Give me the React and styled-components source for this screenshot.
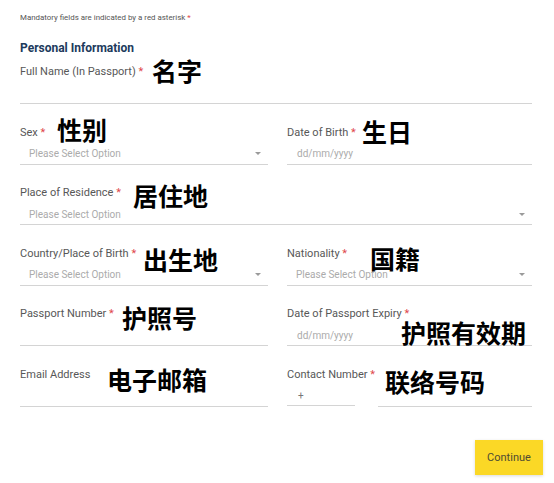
import styled, { createGlobalStyle } from "styled-components";

const GlobalStyle = createGlobalStyle`
  html, body {
    margin: 0;
    padding: 0;
    background: #ffffff;
  }
  body {
    font-family: Roboto, "Noto Sans", "Noto Sans CJK SC", sans-serif;
  }
`;

const rows = [
  { label: "Sex", req: true, kind: "select", note: "性别", x: 37, y: 3 },
  { label: "Date of Birth", req: true, kind: "date", note: "生日", x: 75, y: 5 },
  { label: "Place of Residence", req: true, kind: "select", span: true, note: "居住地", x: 113, y: 9 },
  { label: "Country/Place of Birth", req: true, kind: "select", note: "出生地", x: 123, y: 12 },
  { label: "Nationality", req: true, kind: "select", note: "国籍", x: 83, y: 11 },
  { label: "Passport Number", req: true, kind: "text", note: "护照号", x: 102, y: 10 },
  { label: "Date of Passport Expiry", req: true, kind: "date", note: "护照有效期", x: 114, y: 25 },
  { label: "Email Address", kind: "text", note: "电子邮箱", x: 87, y: 11 },
  { label: "Contact Number", req: true, kind: "phone", note: "联络号码", x: 98, y: 13 },
];

export default function App() {
  return (
    <>
      <GlobalStyle />
      <Page>
        <Notice>
          Mandatory fields are indicated by a red asterisk <Req>*</Req>
        </Notice>
        <SectionTitle>Personal Information</SectionTitle>
        <FormGrid>
          <Field $span>
            <Label>
              Full Name (In Passport) <Req>*</Req>
            </Label>
            <InputLine />
            <Annotation $x={132} $y={5}>名字</Annotation>
          </Field>
          {rows.map(r => (
            <Field key={r.label} $span={r.span}>
              <Label>
                {r.label} {r.req && <Req>*</Req>}
              </Label>
              {r.kind === "phone" ? (
                <PhoneRow>
                  <PrefixBox>+</PrefixBox>
                  <InputLine $grow />
                </PhoneRow>
              ) : (
                <InputLine>
                  {r.kind === "select" && <Placeholder>Please Select Option</Placeholder>}
                  {r.kind === "date" && <Placeholder $date>dd/mm/yyyy</Placeholder>}
                  {r.kind === "select" && <Caret />}
                </InputLine>
              )}
              <Annotation $x={r.x} $y={r.y}>{r.note}</Annotation>
            </Field>
          ))}
        </FormGrid>
        <Footer>
          <ContinueButton>Continue</ContinueButton>
        </Footer>
      </Page>
    </>
  );
}

const Page = styled.div`
  width: 554px;
  height: 483px;
  box-sizing: border-box;
  padding: 12px 22px 0 20px;
  overflow: hidden;
`;

const Notice = styled.p`
  margin: 0;
  font-size: 7.9px;
  line-height: 12px;
  color: #555;
`;

const Req = styled.span`
  color: #e0474c;
`;

const SectionTitle = styled.h2`
  margin: 16px 0 9px;
  font-size: 12px;
  line-height: 16px;
  font-weight: 700;
  color: #203a5c;
`;

const FormGrid = styled.div`
  display: grid;
  grid-template-columns: 248px 1fr;
  column-gap: 19px;
  row-gap: 21.6px;
`;

const Field = styled.div`
  position: relative;
  grid-column: ${p => (p.$span ? "1 / -1" : "auto")};
`;

const Label = styled.div`
  font-size: 11px;
  line-height: 14px;
  color: #575757;
  margin-bottom: 4px;
  white-space: nowrap;
`;

const InputLine = styled.div`
  height: 20px;
  border-bottom: 1px solid #d4d4d4;
  display: flex;
  align-items: center;
  padding: 0 7px 0 9px;
  flex: ${p => (p.$grow ? 1 : "none")};
`;

const Placeholder = styled.span`
  flex: 1;
  font-size: 10px;
  color: #ababab;
  margin-left: ${p => (p.$date ? "1px" : "0")};
`;

const Caret = styled.span`
  width: 0;
  height: 0;
  border-left: 3px solid transparent;
  border-right: 3px solid transparent;
  border-top: 3px solid #9a9a9a;
`;

const PhoneRow = styled.div`
  display: flex;
  gap: 23px;
`;

const PrefixBox = styled.div`
  width: 68px;
  height: 20px;
  box-sizing: border-box;
  border-bottom: 1px solid #d4d4d4;
  padding-left: 11px;
  font-size: 10px;
  line-height: 20px;
  color: #777;
`;

const Annotation = styled.span`
  position: absolute;
  left: ${p => p.$x}px;
  top: ${p => p.$y}px;
  transform: translateY(-50%);
  font-family: "Noto Sans CJK SC", sans-serif;
  font-size: 25px;
  line-height: 1;
  font-weight: 700;
  color: #000;
  white-space: nowrap;
  pointer-events: none;
`;

const Footer = styled.div`
  display: flex;
  justify-content: flex-end;
  margin: 33px -11px 0 0;
`;

const ContinueButton = styled.button`
  width: 68px;
  height: 35px;
  border: none;
  background: #fbd826;
  color: #4f4b33;
  font-family: Roboto, sans-serif;
  font-size: 11px;
  box-shadow: 0 1px 3px rgba(0, 0, 0, 0.15);
  cursor: pointer;
`;
